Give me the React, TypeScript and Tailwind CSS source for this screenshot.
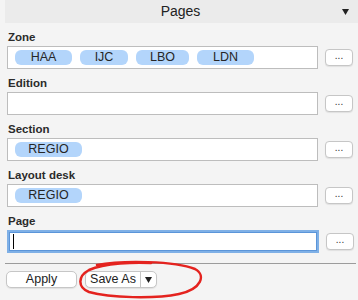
import React from "react"

const FIELDS: { label: string; chips: { text: string; w: string }[]; focused?: boolean }[] = [
  {
    label: "Zone",
    chips: [
      { text: "HAA", w: "w-[57px]" },
      { text: "IJC", w: "w-[48px]" },
      { text: "LBO", w: "w-[53px]" },
      { text: "LDN", w: "w-[57px]" },
    ],
  },
  { label: "Edition", chips: [] },
  { label: "Section", chips: [{ text: "REGIO", w: "w-[67px]" }] },
  { label: "Layout desk", chips: [{ text: "REGIO", w: "w-[67px]" }] },
  { label: "Page", chips: [], focused: true },
]

function DotsButton() {
  return (
    <button className="w-[28px] h-[17px] bg-white border border-[#c6c6c6] rounded-[4px] shadow-[0_1px_1px_rgba(0,0,0,0.08)] flex items-center justify-center text-[10px] leading-none text-[#333] pb-[3px]">
      ...
    </button>
  )
}

function Field({ label, chips, focused }: { label: string; chips: { text: string; w: string }[]; focused?: boolean }) {
  return (
    <div className="flex flex-col">
      <div className="h-[14px] mb-[2px] text-[11.5px] leading-[14px] font-bold text-[#2b2b2b] pl-[1px]">{label}</div>
      <div className="flex items-center gap-[7px] h-[23px]">
        <div
          className={
            focused
              ? "w-[312px] h-[23px] bg-white border-2 border-[#7fb0e6] shadow-[inset_0_0_0_1px_#5b95d9] flex items-center pl-[4px]"
              : "w-[311px] h-[23px] bg-white border border-[#bdbdbd] flex items-center gap-[8px] pl-[7px]"
          }
        >
          {focused && <span className="w-[1px] h-[15px] bg-black" />}
          {chips.map(c => (
            <span
              key={c.text}
              className={`${c.w} h-[15px] rounded-[6px] bg-[#b3d5fb] text-[12.5px] leading-[15px] text-[#262626] text-center`}
            >
              {c.text}
            </span>
          ))}
        </div>
        <DotsButton />
      </div>
    </div>
  )
}

export default function App() {
  return (
    <div className="relative w-[358px] h-[300px] bg-[#f4f4f4] overflow-hidden" style={{ fontFamily: '"Liberation Sans", Arial, sans-serif' }}>
      {/* Header */}
      <div className="ml-[5px] h-[23px] bg-[#ebebeb] relative flex items-center justify-center">
        <span className="text-[14px] text-[#222] pr-[2px]">Pages</span>
        <svg className="absolute right-[9px] top-[9px]" width="7" height="6" viewBox="0 0 7 6">
          <polygon points="0,0 7,0 3.5,6" fill="#222" />
        </svg>
      </div>

      {/* Fields */}
      <div className="flex flex-col gap-[7px] pl-[7px] pt-[7px]">
        {FIELDS.map(f => (
          <Field key={f.label} label={f.label} chips={f.chips} focused={f.focused} />
        ))}
      </div>

      {/* Separator */}
      <div className="ml-[5px] mr-[2px] mt-[10px] h-[1px] bg-[#9c9c9c]" />

      {/* Buttons */}
      <div className="flex items-center gap-[8px] pl-[6px] pt-[7px]">
        <button className="w-[71px] h-[17px] bg-white border border-[#c6c6c6] rounded-[5px] shadow-[0_1px_1px_rgba(0,0,0,0.08)] text-[12.5px] leading-none text-[#222]">
          Apply
        </button>
        <div className="w-[72px] h-[17px] bg-white border border-[#c6c6c6] rounded-[5px] shadow-[0_1px_1px_rgba(0,0,0,0.08)] flex items-stretch">
          <span className="flex-1 flex items-center justify-center text-[12.5px] leading-none text-[#222]">Save As</span>
          <span className="w-[1px] bg-[#c6c6c6]" />
          <span className="w-[15px] flex items-center justify-center">
            <svg width="7" height="6" viewBox="0 0 7 6">
              <polygon points="0,0 7,0 3.5,6" fill="#222" />
            </svg>
          </span>
        </div>
      </div>

      {/* Red annotation ellipse */}
      <svg className="absolute left-[75px] top-[260px]" width="130" height="40" viewBox="0 0 130 40">
        <path
          d="M22 5 C48 0, 100 1, 120 9 C131 15, 127 29, 104 34 C80 39, 35 38, 14 32 C2 27, 3 16, 14 10 C30 3, 60 2, 76 3"
          fill="none"
          stroke="#e4231f"
          strokeWidth="2.5"
          strokeLinecap="round"
        />
      </svg>
    </div>
  )
}
